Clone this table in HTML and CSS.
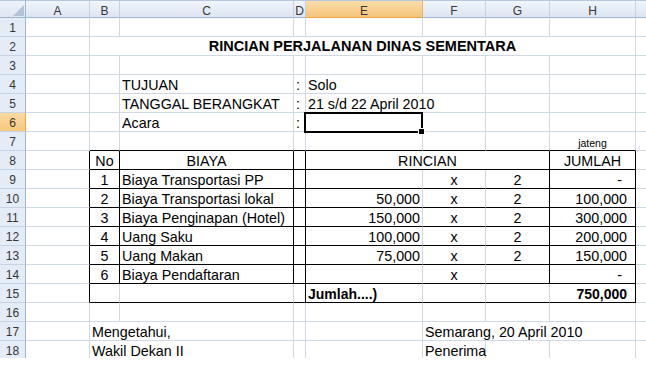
FILE: index.html
```html
<!DOCTYPE html>
<html>
<head>
<meta charset="utf-8">
<link rel="stylesheet" href="styles.css">
</head>
<body>
<div class="sheet">
  <div class="r hdr">
    <div class="corner"></div>
    <div class="ch">A</div><div class="ch">B</div><div class="ch">C</div><div class="ch">D</div>
    <div class="ch sel">E</div><div class="ch">F</div><div class="ch">G</div><div class="ch">H</div><div class="ch last"></div>
  </div>

  <div class="r">
    <div class="rh">1</div>
    <div class="c"></div><div class="c"></div><div class="c"></div><div class="c"></div><div class="c"></div><div class="c"></div><div class="c"></div><div class="c"></div><div class="c last"></div>
  </div>

  <div class="r">
    <div class="rh">2</div>
    <div class="c"></div><div class="c span7 tc title">RINCIAN PERJALANAN DINAS SEMENTARA</div><div class="c last"></div>
  </div>

  <div class="r">
    <div class="rh">3</div>
    <div class="c"></div><div class="c"></div><div class="c"></div><div class="c"></div><div class="c"></div><div class="c"></div><div class="c"></div><div class="c"></div><div class="c last"></div>
  </div>

  <div class="r">
    <div class="rh">4</div>
    <div class="c"></div><div class="c"></div><div class="c">TUJUAN</div><div class="c">:</div><div class="c">Solo</div><div class="c"></div><div class="c"></div><div class="c"></div><div class="c last"></div>
  </div>

  <div class="r">
    <div class="rh">5</div>
    <div class="c"></div><div class="c"></div><div class="c">TANGGAL BERANGKAT</div><div class="c">:</div><div class="c span2">21 s/d 22 April 2010</div><div class="c"></div><div class="c"></div><div class="c last"></div>
  </div>

  <div class="r">
    <div class="rh rsel">6</div>
    <div class="c"></div><div class="c"></div><div class="c">Acara</div><div class="c">:</div><div class="c active"><span class="handle"></span></div><div class="c"></div><div class="c"></div><div class="c"></div><div class="c last"></div>
  </div>

  <div class="r">
    <div class="rh">7</div>
    <div class="c"></div><div class="c kb"></div><div class="c kb"></div><div class="c kb"></div><div class="c kb"></div><div class="c kb"></div><div class="c kb"></div><div class="c kb tc small">jateng</div><div class="c last"></div>
  </div>

  <div class="r">
    <div class="rh">8</div>
    <div class="c kr"></div><div class="c kr kb tc">No</div><div class="c kr kb tc">BIAYA</div><div class="c kr kb"></div><div class="c span3 kr kb tc">RINCIAN</div><div class="c kr kb tc">JUMLAH</div><div class="c last"></div>
  </div>

  <div class="r">
    <div class="rh">9</div>
    <div class="c kr"></div><div class="c kr kb tc">1</div><div class="c kr kb">Biaya Transportasi PP</div><div class="c kr kb"></div><div class="c kb tr"></div><div class="c kb tc">x</div><div class="c kr kb tc">2</div><div class="c kr kb tr dash">-</div><div class="c last"></div>
  </div>

  <div class="r">
    <div class="rh">10</div>
    <div class="c kr"></div><div class="c kr kb tc">2</div><div class="c kr kb">Biaya Transportasi lokal</div><div class="c kr kb"></div><div class="c kb tr">50,000</div><div class="c kb tc">x</div><div class="c kr kb tc">2</div><div class="c kr kb tr acc">100,000</div><div class="c last"></div>
  </div>

  <div class="r">
    <div class="rh">11</div>
    <div class="c kr"></div><div class="c kr kb tc">3</div><div class="c kr kb">Biaya Penginapan (Hotel)</div><div class="c kr kb"></div><div class="c kb tr">150,000</div><div class="c kb tc">x</div><div class="c kr kb tc">2</div><div class="c kr kb tr acc">300,000</div><div class="c last"></div>
  </div>

  <div class="r">
    <div class="rh">12</div>
    <div class="c kr"></div><div class="c kr kb tc">4</div><div class="c kr kb">Uang Saku</div><div class="c kr kb"></div><div class="c kb tr">100,000</div><div class="c kb tc">x</div><div class="c kr kb tc">2</div><div class="c kr kb tr acc">200,000</div><div class="c last"></div>
  </div>

  <div class="r">
    <div class="rh">13</div>
    <div class="c kr"></div><div class="c kr kb tc">5</div><div class="c kr kb">Uang Makan</div><div class="c kr kb"></div><div class="c kb tr">75,000</div><div class="c kb tc">x</div><div class="c kr kb tc">2</div><div class="c kr kb tr acc">150,000</div><div class="c last"></div>
  </div>

  <div class="r">
    <div class="rh">14</div>
    <div class="c kr"></div><div class="c kr kb tc">6</div><div class="c kr kb">Biaya Pendaftaran</div><div class="c kr kb"></div><div class="c kb tr"></div><div class="c kb tc">x</div><div class="c kr kb tc"></div><div class="c kr kb tr dash">-</div><div class="c last"></div>
  </div>

  <div class="r">
    <div class="rh">15</div>
    <div class="c kr"></div><div class="c kb"></div><div class="c kb"></div><div class="c kr kb"></div><div class="c kb b">Jumlah....)</div><div class="c kb"></div><div class="c kb"></div><div class="c kr kb tr acc b">750,000</div><div class="c last"></div>
  </div>

  <div class="r">
    <div class="rh">16</div>
    <div class="c"></div><div class="c"></div><div class="c"></div><div class="c"></div><div class="c"></div><div class="c"></div><div class="c"></div><div class="c"></div><div class="c last"></div>
  </div>

  <div class="r">
    <div class="rh">17</div>
    <div class="c"></div><div class="c span2">Mengetahui,</div><div class="c"></div><div class="c"></div><div class="c span3">Semarang, 20 April 2010</div><div class="c last"></div>
  </div>

  <div class="r">
    <div class="rh">18</div>
    <div class="c"></div><div class="c span2">Wakil Dekan II</div><div class="c"></div><div class="c"></div><div class="c">Penerima</div><div class="c"></div><div class="c"></div><div class="c last"></div>
  </div>
</div>
</body>
</html>
```
FILE: styles.css
```css
html, body {
  margin: 0;
  padding: 0;
  background: #ffffff;
}

.sheet {
  width: 646px;
  height: 358px;
  overflow: hidden;
  font-family: "Liberation Sans", Arial, sans-serif;
  font-size: 14.3px;
  color: #000;
}

.r {
  display: grid;
  grid-template-columns: 26px 64px 30px 174px 12px 117px 63px 64px 86px 1fr;
  height: 19px;
}

.r.hdr {
  height: 18px;
}

.corner {
  position: relative;
  background: linear-gradient(#eef3fa, #dde6f2);
  border-right: 1px solid #9eb6ce;
  border-bottom: 1px solid #9eb6ce;
  border-top: 1px solid #b6c8dd;
  box-sizing: border-box;
}

.corner::after {
  content: "";
  position: absolute;
  right: 1px;
  bottom: 1px;
  width: 11px;
  height: 11px;
  background: #b4c3d7;
  clip-path: polygon(100% 0, 100% 100%, 0 100%);
}

.ch {
  box-sizing: border-box;
  background: linear-gradient(#f1f5fb, #dce5f2);
  border-top: 1px solid #b6c8dd;
  border-right: 1px solid #c3d1e3;
  border-bottom: 1px solid #9eb6ce;
  font-size: 12px;
  line-height: 12px;
  padding-top: 4px;
  text-align: center;
  color: #363636;
}

.ch.sel {
  background: linear-gradient(#fbdda9, #f5c47c);
  border-bottom-color: #f0a444;
  border-right-color: #e9b46a;
}

.ch.last {
  border-right: none;
}

.rh {
  box-sizing: border-box;
  background: #e4ecf7;
  border-right: 1px solid #9eb6ce;
  border-bottom: 1px solid #c5d3e5;
  font-size: 12px;
  line-height: 12px;
  padding-top: 4px;
  text-align: center;
  color: #363636;
}

.rh.rsel {
  background: linear-gradient(#fcd9a0, #f7c980);
  border-right-color: #f0a444;
}

.c {
  box-sizing: border-box;
  border-right: 1px solid #d0d7e5;
  border-bottom: 1px solid #d0d7e5;
  padding: 0 2px;
  white-space: nowrap;
  display: flex;
  align-items: flex-end;
  line-height: 15px;
  min-width: 0;
}

.c.last {
  border-right: none;
}

.tc { justify-content: center; }
.tr { justify-content: flex-end; }
.b { font-weight: bold; font-size: 14px; }

.title {
  font-weight: bold;
  font-size: 14.5px;
  padding-bottom: 1px;
}

.small {
  font-size: 10.5px;
  line-height: 11px;
  padding-bottom: 1px;
}

.kr { border-right-color: #000; }
.kb { border-bottom-color: #000; }

.span2 { grid-column: span 2; }
.span3 { grid-column: span 3; }
.span7 { grid-column: span 7; }

.acc { padding-right: 8px; }
.dash { padding-right: 13px; }

.active {
  position: relative;
}

.active::before {
  content: "";
  position: absolute;
  left: -2px;
  top: -1px;
  width: 119px;
  height: 21px;
  border: 2px solid #000;
  box-sizing: border-box;
}

.handle {
  position: absolute;
  left: 112px;
  top: 15px;
  width: 5px;
  height: 5px;
  background: #000;
  border: 1px solid #fff;
}
```
